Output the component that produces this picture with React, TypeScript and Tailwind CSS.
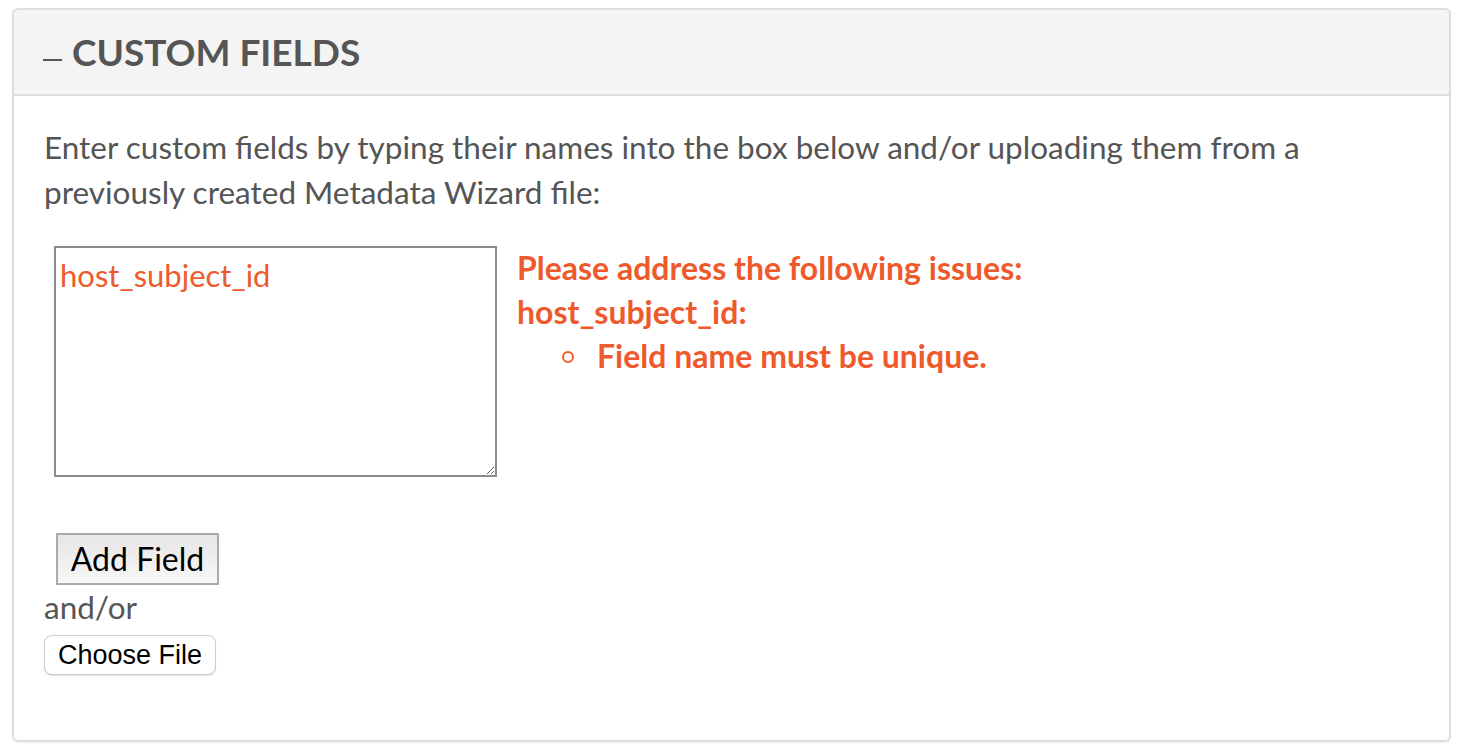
import React from "react";

const errors = [{ field: "host_subject_id", issues: ["Field name must be unique."] }];

export default function App() {
  return (
    <div className="min-h-screen bg-white pl-[12px] pr-[13px] pt-[8px] font-['Lato',sans-serif] text-[#555555]">
      <section className="overflow-hidden rounded-md border-2 border-[#dddddd] shadow-[0_1px_2px_rgba(0,0,0,0.05)]">
        <header className="flex h-[86px] items-center gap-[10px] border-b-2 border-[#dddddd] bg-[#f4f4f4] px-[29px]">
          <span className="mt-[16px] inline-block h-[2px] w-[19px] bg-[#555555]" />
          <h2 className="text-[37px] font-bold text-[#555555]">CUSTOM FIELDS</h2>
        </header>

        <div className="px-[30px] pb-[65px] pt-[29px]">
          <p className="text-[31.5px] leading-[45px]">
            Enter custom fields by typing their names into the box below and/or uploading them from a
            <br />
            previously created Metadata Wizard file:
          </p>

          <div className="mt-[31px] flex items-start gap-[20px] pl-[10px]">
            <textarea
              className="h-[231px] w-[443px] shrink-0 resize border-2 border-[#8c8c8c] px-[4px] pt-[8px] font-['Lato',sans-serif] text-[31px] leading-[38px] text-[#ee5a2c] outline-none"
              defaultValue="host_subject_id"
            />
            <div className="text-[32px] font-bold leading-[44px] text-[#ee5a2c]">
              <p>Please address the following issues:</p>
              {errors.map((e) => (
                <div key={e.field}>
                  <p>{e.field}:</p>
                  <ul className="pl-[45px]">
                    {e.issues.map((i) => (
                      <li key={i} className="flex items-center gap-[23px]">
                        <span className="mt-[2px] inline-block h-[12px] w-[12px] rounded-full border-2 border-[#ee5a2c]" />
                        <span>{i}</span>
                      </li>
                    ))}
                  </ul>
                </div>
              ))}
            </div>
          </div>

          <button
            type="button"
            className="ml-[12px] mt-[56px] block h-[52px] w-[163px] border-2 border-[#aaaaaa] bg-gradient-to-b from-[#e6e6e6] to-[#f7f7f7] text-[32px] leading-none text-black"
          >
            Add Field
          </button>
          <p className="text-[31.5px] leading-[45px]">and/or</p>
          <button
            type="button"
            className="mt-[5px] block h-[40px] w-[172px] rounded-lg border border-[#cccccc] bg-white font-['Liberation_Sans',sans-serif] text-[27px] leading-none text-black shadow-[0_1px_1px_rgba(0,0,0,0.12)]"
          >
            Choose File
          </button>
        </div>
      </section>
    </div>
  );
}
